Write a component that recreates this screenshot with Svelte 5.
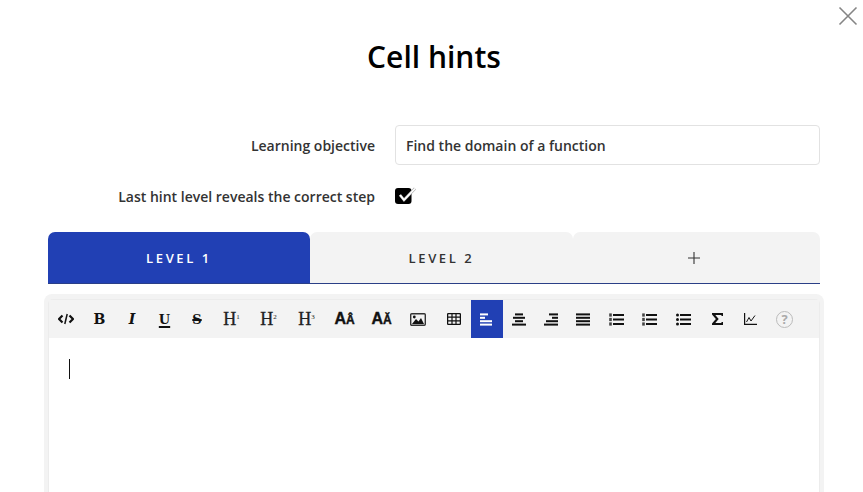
<script>
	// width of each toolbar button, taken so the icon centres line up
	const buttons = [
		{ id: 'code', w: 34 },
		{ id: 'bold', w: 33 },
		{ id: 'italic', w: 32 },
		{ id: 'underline', w: 33 },
		{ id: 'strike', w: 32 },
		{ id: 'h1', w: 37 },
		{ id: 'h2', w: 37 },
		{ id: 'h3', w: 39 },
		{ id: 'size-up', w: 37 },
		{ id: 'size-down', w: 37 },
		{ id: 'image', w: 36 },
		{ id: 'table', w: 35 },
		{ id: 'left', w: 32, active: true },
		{ id: 'center', w: 32 },
		{ id: 'right', w: 32 },
		{ id: 'justify', w: 32 },
		{ id: 'ol', w: 34 },
		{ id: 'ol-alpha', w: 33 },
		{ id: 'ul', w: 34 },
		{ id: 'sigma', w: 35 },
		{ id: 'chart', w: 30 },
		{ id: 'help', w: 39 }
	];

	const alignLines = {
		left: [[0, 8], [0, 5], [0, 12], [0, 12]],
		center: [[3, 11], [1, 13], [3, 11], [0, 14]],
		right: [[5, 14], [8, 14], [2, 14], [0, 14]],
		justify: [[0, 14], [0, 14], [0, 14], [0, 14]]
	};
</script>

<main class="page">
	<button class="close" aria-label="Close">
		<svg width="20" height="20" viewBox="0 0 20 20">
			<path d="M1.5 1.5 18.5 18.5M18.5 1.5 1.5 18.5" stroke="#858585" stroke-width="1.6" fill="none" />
		</svg>
	</button>

	<h1>Cell hints</h1>

	<div class="row objective">
		<label for="objective">Learning objective</label>
		<input id="objective" value="Find the domain of a function" />
	</div>

	<div class="row reveal">
		<span class="label">Last hint level reveals the correct step</span>
		<span class="check">
			<svg width="22" height="20" viewBox="0 0 22 20">
				<rect x="0" y="2" width="16.5" height="16" rx="3" fill="#000" />
				<path d="M5 9 9 14 20 2.5" stroke="#aaa" stroke-width="2.8" fill="none" />
				<path d="M5 9 9 14 20 2.5" stroke="#fff" stroke-width="1.8" fill="none" />
			</svg>
		</span>
	</div>

	<div class="tabs">
		<button class="tab active">LEVEL 1</button>
		<button class="tab">LEVEL 2</button>
		<button class="tab add" aria-label="Add level">
			<svg width="14" height="14" viewBox="0 0 14 14">
				<path d="M7 1v12M1 7h12" stroke="#333" stroke-width="1.1" fill="none" />
			</svg>
		</button>
	</div>

	<section class="editor">
		<div class="inner">
			<div class="toolbar">
				{#each buttons as b}
					<span class="tool" class:on={b.active} style="width: {b.w}px">
						{#if b.id === 'code'}
							<svg width="16" height="12" viewBox="0 0 16 12">
								<path d="M4.5 2.5 1 6l3.5 3.5M11.5 2.5 15 6l-3.5 3.5" stroke="#111" stroke-width="2.2" fill="none" />
								<path d="M9.2 1 6.8 11" stroke="#111" stroke-width="1.5" fill="none" />
							</svg>
						{:else if b.id === 'bold'}
							<span class="slab">B</span>
						{:else if b.id === 'italic'}
							<span class="slab it">I</span>
						{:else if b.id === 'underline'}
							<span class="slab small under">U</span>
						{:else if b.id === 'strike'}
							<span class="slab small strike">S</span>
						{:else if b.id === 'h1' || b.id === 'h2' || b.id === 'h3'}
							<span class="head">H<sup>{b.id[1]}</sup></span>
						{:else if b.id === 'size-up' || b.id === 'size-down'}
							<span class="size">A<small>{b.id === 'size-up' ? 'Â' : 'Ǎ'}</small></span>
						{:else if b.id === 'image'}
							<svg width="16" height="13" viewBox="0 0 16 13">
								<rect x="0.7" y="0.7" width="14.6" height="11.6" rx="1" fill="#f3f3f3" stroke="#333" stroke-width="1.4" />
								<circle cx="4.3" cy="4" r="1.4" fill="#111" />
								<path d="M2 11 6 6l2.5 2.5L11 5l3 6z" fill="#111" />
							</svg>
						{:else if b.id === 'table'}
							<svg width="14" height="12" viewBox="0 0 14 12">
								<rect x="0.6" y="0.6" width="12.8" height="10.8" rx="1" fill="none" stroke="#111" stroke-width="1.3" />
								<path d="M0.6 4.2h12.8M0.6 7.8h12.8M5 0.6v10.8M9 0.6v10.8" stroke="#111" stroke-width="1.2" fill="none" />
							</svg>
						{:else if alignLines[b.id]}
							<svg width="14" height="13" viewBox="0 0 14 13">
								{#each alignLines[b.id] as line, i}
									<rect x={line[0]} y={i * 3.4 + 0.4} width={line[1] - line[0]} height="2" fill={b.active ? '#fff' : '#111'} />
								{/each}
							</svg>
						{:else if b.id === 'ol' || b.id === 'ol-alpha' || b.id === 'ul'}
							<svg width="15" height="13" viewBox="0 0 15 13">
								{#each [2, 6.5, 11] as y}
									{#if b.id === 'ul'}
										<circle cx="1.5" cy={y} r="1.5" fill="#111" />
									{:else}
										<rect x="0.2" y={y - 1.6} width="2.6" height="3.2" fill="#444" />
									{/if}
									<rect x="4" y={y - 1} width="11" height="2" fill="#111" />
								{/each}
							</svg>
						{:else if b.id === 'sigma'}
							<svg width="11" height="12" viewBox="0 0 11 12">
								<path d="M10.5 3V1H1l4.3 5L1 11h9.5V9" stroke="#111" stroke-width="2.1" fill="none" />
							</svg>
						{:else if b.id === 'chart'}
							<svg width="13" height="12" viewBox="0 0 13 12">
								<path d="M0.6 0v11.3H13" stroke="#111" stroke-width="1.2" fill="none" />
								<path d="M2.5 9 5 4.5 7 8l4-5.5" stroke="#111" stroke-width="1" fill="none" />
							</svg>
						{:else if b.id === 'help'}
							<span class="help">?</span>
						{/if}
					</span>
				{/each}
			</div>
			<div class="body"><span class="caret"></span></div>
		</div>
	</section>
</main>

<style>
	:global(body) {
		background: #fff;
		font-family: 'Open Sans', sans-serif;
		color: #222;
	}

	.page {
		position: relative;
		height: 492px;
		padding: 0 43px 0 48px;
		box-sizing: border-box;
		overflow: hidden;
	}

	.close {
		position: absolute;
		top: 6px;
		right: 5px;
		padding: 0;
		border: 0;
		background: none;
		line-height: 0;
	}

	h1 {
		margin: 0;
		padding-top: 36px;
		height: 125px;
		box-sizing: border-box;
		font-size: 30px;
		line-height: 41px;
		font-weight: 600;
		text-align: center;
		color: #000;
	}

	.row {
		display: flex;
		align-items: center;
		gap: 20px;
	}

	.row label,
	.label {
		width: 327px;
		text-align: right;
		font-size: 14px;
		font-weight: 600;
		color: #333;
	}

	.objective {
		height: 40px;
	}

	input {
		flex: 1;
		height: 40px;
		box-sizing: border-box;
		padding: 0 10px;
		border: 1px solid #e2e2e2;
		border-radius: 4px;
		font: 600 14px 'Open Sans', sans-serif;
		color: #333;
	}

	.reveal {
		height: 24px;
		margin-top: 19px;
	}

	.check {
		display: block;
		height: 20px;
		margin-top: 0;
	}

	.tabs {
		display: flex;
		height: 52px;
		margin-top: 24px;
		border-bottom: 1px solid #2a3f87;
		box-sizing: border-box;
	}

	.tab {
		width: 263px;
		padding: 0;
		border: 0;
		border-radius: 7px 7px 0 0;
		background: #f3f3f3;
		font: 600 13px 'Open Sans', sans-serif;
		letter-spacing: 2.6px;
		color: #333;
	}

	.tab.active {
		width: 262px;
		background: #2140b4;
		color: #fff;
	}

	.tab.add {
		width: 247px;
		padding-right: 5px;
		line-height: 0;
	}

	.editor {
		margin: 10px -4px 0;
		padding: 6px 5px 0;
		background: #f3f3f3;
		border-radius: 8px 8px 0 0;
		height: 240px;
		box-sizing: border-box;
	}

	.inner {
		height: 100%;
		background: #fff;
		box-shadow: 0 0 0 1px #ececec;
		border-radius: 4px 4px 0 0;
	}

	.toolbar {
		display: flex;
		height: 38px;
		background: #f3f3f3;
		overflow: hidden;
	}

	.tool {
		display: flex;
		align-items: center;
		justify-content: center;
		flex: none;
		color: #111;
	}

	.tool.on {
		background: #2140b4;
	}

	.slab {
		font: 700 14px 'DejaVu Serif', serif;
		line-height: 1;
	}

	.slab.it {
		font-style: italic;
	}

	.slab.small {
		font-size: 13px;
	}

	.under {
		text-decoration: underline;
		text-decoration-thickness: 2px;
		text-underline-offset: 2px;
	}

	.strike {
		font-size: 14px;
		text-decoration: line-through;
		text-decoration-thickness: 1.5px;
	}

	.head {
		font: 400 18px 'Liberation Serif', serif;
		line-height: 1;
		color: #222;
		-webkit-text-stroke: 0.3px #222;
	}

	.head sup {
		font-size: 7px;
		vertical-align: 6px;
		line-height: 0;
		-webkit-text-stroke: 0;
	}

	.size {
		font: 700 16px 'Liberation Sans', sans-serif;
		line-height: 1;
		-webkit-text-stroke: 0.4px #111;
	}

	.size small {
		font-size: 12px;
	}

	.help {
		width: 15px;
		height: 15px;
		border: 1.5px solid #bbb;
		border-radius: 50%;
		text-align: center;
		font: 700 13px/15px 'Open Sans', sans-serif;
		color: #aaa;
	}

	.body {
		padding: 21px 20px;
	}

	.caret {
		display: block;
		width: 1px;
		height: 20px;
		background: #111;
	}
</style>
